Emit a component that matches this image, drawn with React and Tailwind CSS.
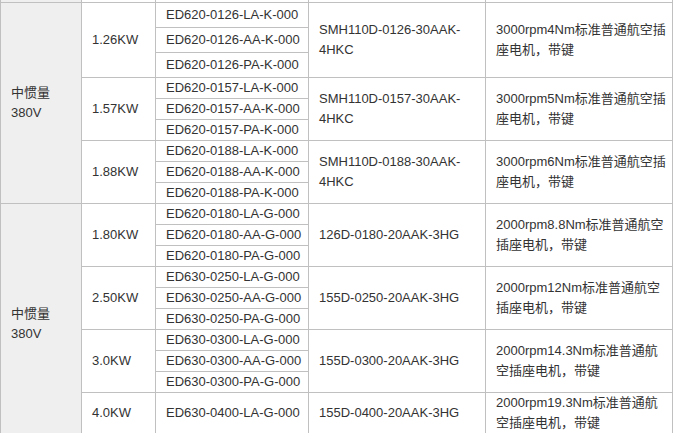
import React from 'react';

const groups = [
  {
    kw: '1.26KW',
    h: 'h-[75px]',
    sub: 'h-[25px]',
    models: ['ED620-0126-LA-K-000', 'ED620-0126-AA-K-000', 'ED620-0126-PA-K-000'],
    motor: ['SMH110D-0126-30AAK-', '4HKC'],
    desc: ['3000rpm4Nm标准普通航空插', '座电机，带键'],
  },
  {
    kw: '1.57KW',
    h: 'h-[63px]',
    sub: 'h-[21px]',
    models: ['ED620-0157-LA-K-000', 'ED620-0157-AA-K-000', 'ED620-0157-PA-K-000'],
    motor: ['SMH110D-0157-30AAK-', '4HKC'],
    desc: ['3000rpm5Nm标准普通航空插', '座电机，带键'],
  },
  {
    kw: '1.88KW',
    h: 'h-[63px]',
    sub: 'h-[21px]',
    models: ['ED620-0188-LA-K-000', 'ED620-0188-AA-K-000', 'ED620-0188-PA-K-000'],
    motor: ['SMH110D-0188-30AAK-', '4HKC'],
    desc: ['3000rpm6Nm标准普通航空插', '座电机，带键'],
  },
];

const groups2 = [
  {
    kw: '1.80KW',
    h: 'h-[63px]',
    sub: 'h-[21px]',
    models: ['ED620-0180-LA-G-000', 'ED620-0180-AA-G-000', 'ED620-0180-PA-G-000'],
    motor: ['126D-0180-20AAK-3HG'],
    desc: ['2000rpm8.8Nm标准普通航空', '插座电机，带键'],
  },
  {
    kw: '2.50KW',
    h: 'h-[63px]',
    sub: 'h-[21px]',
    models: ['ED630-0250-LA-G-000', 'ED630-0250-AA-G-000', 'ED630-0250-PA-G-000'],
    motor: ['155D-0250-20AAK-3HG'],
    desc: ['2000rpm12Nm标准普通航空', '插座电机，带键'],
  },
  {
    kw: '3.0KW',
    h: 'h-[63px]',
    sub: 'h-[21px]',
    models: ['ED630-0300-LA-G-000', 'ED630-0300-AA-G-000', 'ED630-0300-PA-G-000'],
    motor: ['155D-0300-20AAK-3HG'],
    desc: ['2000rpm14.3Nm标准普通航', '空插座电机，带键'],
  },
  {
    kw: '4.0KW',
    h: 'h-[41px]',
    sub: 'h-[21px]',
    models: ['ED630-0400-LA-G-000'],
    motor: ['155D-0400-20AAK-3HG'],
    desc: ['2000rpm19.3Nm标准普通航', '空插座电机，带键'],
  },
];

const Lines = ({ lines }) => (
  <div className="leading-[20px]">
    {lines.map((l, i) => (
      <div key={i} className="whitespace-nowrap">{l}</div>
    ))}
  </div>
);

const Group = ({ g }) => (
  <div className={`flex shrink-0 border-b border-[#c0c0c0] ${g.h}`}>
    <div className="w-[74px] border-r border-[#c0c0c0] flex items-center pl-[10px]">
      {g.kw}
    </div>
    <div className="w-[153px] border-r border-[#c0c0c0] flex flex-col">
      {g.models.map((m, i) => {
        const last = i === g.models.length - 1;
        return (
          <div
            key={m}
            className={`flex items-center pl-[10px] whitespace-nowrap ${
              last ? 'flex-1' : `${g.sub} border-b border-[#c0c0c0]`
            }`}
          >
            {m}
          </div>
        );
      })}
    </div>
    <div className="w-[177px] border-r border-[#c0c0c0] flex items-center pl-[10px]">
      <Lines lines={g.motor} />
    </div>
    <div className="w-[187px] border-r border-[#c0c0c0] flex items-center pl-[10px]">
      <Lines lines={g.desc} />
    </div>
  </div>
);

const InertiaCell = ({ className }) => (
  <div className={`flex items-center pl-[10px] bg-[#efefef] border-b border-[#c0c0c0] ${className}`}>
    <div className="leading-[20px]">
      <div>中惯量</div>
      <div>380V</div>
    </div>
  </div>
);

export default function App() {
  return (
    <div
      className="w-[675px] h-[433px] overflow-hidden bg-white text-[13px] text-[#333]"
      style={{ fontFamily: '"Liberation Sans", Arial, "Noto Sans CJK SC", sans-serif' }}
    >
      <div className="flex w-[673px] border-l border-[#c0c0c0]">
        {/* 左侧合并列 */}
        <div className="w-[81px] shrink-0 border-r border-[#c0c0c0] flex flex-col">
          <div className="h-[3px] bg-[#efefef] border-b border-[#c0c0c0]" />
          <InertiaCell className="h-[201px]" />
          <InertiaCell className="h-[240px]" />
        </div>

        <div className="flex flex-col">
          {/* 上一行的底部 */}
          <div className="flex h-[3px] border-b border-[#c0c0c0]">
            <div className="w-[74px] border-r border-[#c0c0c0]" />
            <div className="w-[153px] border-r border-[#c0c0c0]" />
            <div className="w-[177px] border-r border-[#c0c0c0]" />
            <div className="w-[187px] border-r border-[#c0c0c0]" />
          </div>
          {groups.map(g => (
            <Group key={g.kw} g={g} />
          ))}
          {groups2.map(g => (
            <Group key={g.kw} g={g} />
          ))}
        </div>
      </div>
    </div>
  );
}
